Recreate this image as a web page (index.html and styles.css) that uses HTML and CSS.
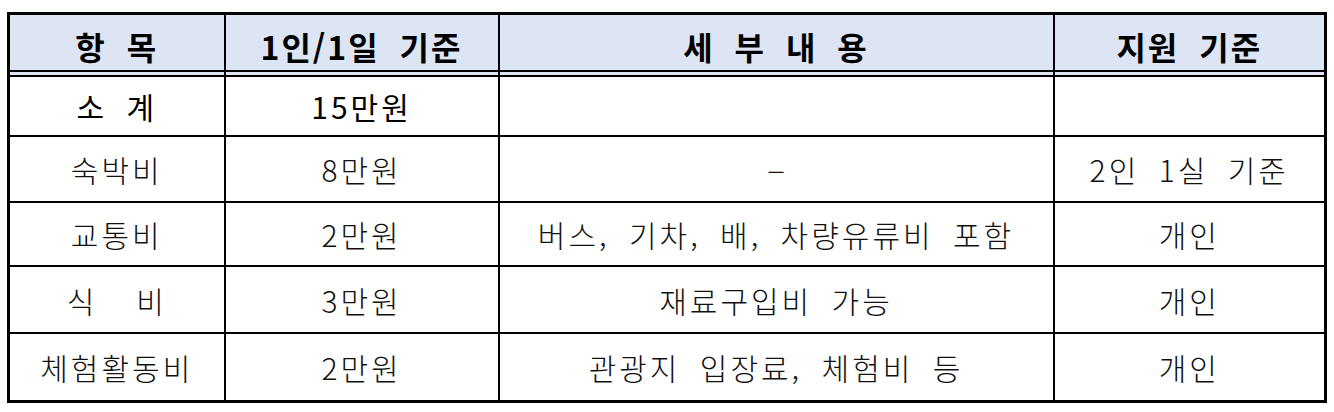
FILE: index.html
```html
<!DOCTYPE html>
<html lang="ko">
<head>
<meta charset="utf-8">
<link rel="stylesheet" href="styles.css">
</head>
<body>
<table class="cost">
  <colgroup>
    <col class="c1"><col class="c2"><col class="c3"><col class="c4">
  </colgroup>
  <thead>
    <tr class="head">
      <th>항 목</th>
      <th>1인/1일 기준</th>
      <th>세 부 내 용</th>
      <th>지원 기준</th>
    </tr>
  </thead>
  <tbody>
    <tr class="sum r1">
      <td>소 계</td>
      <td>15만원</td>
      <td></td>
      <td></td>
    </tr>
    <tr class="r2">
      <td>숙박비</td>
      <td>8만원</td>
      <td><span class="dash">–</span></td>
      <td>2인 1실 기준</td>
    </tr>
    <tr class="r3">
      <td>교통비</td>
      <td>2만원</td>
      <td class="wide">버스, 기차, 배, 차량유류비 포함</td>
      <td>개인</td>
    </tr>
    <tr class="r4">
      <td>식&nbsp; 비</td>
      <td>3만원</td>
      <td>재료구입비 가능</td>
      <td>개인</td>
    </tr>
    <tr class="r5">
      <td>체험활동비</td>
      <td>2만원</td>
      <td>관광지 입장료, 체험비 등</td>
      <td>개인</td>
    </tr>
  </tbody>
</table>
</body>
</html>
```

FILE: styles.css
```css
html, body {
  margin: 0;
  padding: 0;
  background: #ffffff;
}

body {
  padding: 12px 0 0 7px;
  font-family: "Noto Sans CJK KR", "Noto Sans", sans-serif;
}

.cost {
  border-collapse: collapse;
  table-layout: fixed;
  width: 1320px;
  border: 3px solid #000;
}

.c1 { width: 216px; }
.c2 { width: 274px; }
.c3 { width: 555px; }
.c4 { width: 272px; }

.cost th,
.cost td {
  border: 2px solid #000;
  padding: 0;
  text-align: center;
  vertical-align: middle;
  white-space: nowrap;
  font-size: 30px;
  line-height: 1;
  letter-spacing: 3px;
  word-spacing: 8px;
  color: #111;
  font-weight: 300;
}

.cost th:first-child,
.cost td:first-child { border-left: 3px solid #000; }
.cost th:last-child,
.cost td:last-child { border-right: 3px solid #000; }

.head th {
  background: #dde5f5;
  font-weight: 700;
  font-size: 32px;
  letter-spacing: 2px;
  word-spacing: 9px;
  color: #000;
  height: 58px;
  border-top: 3px solid #000;
  border-bottom: 2px solid #000;
  box-shadow: inset 0 -3px 0 #dde5f5, inset 0 -5px 0 #000;
  padding-top: 2px;
}

.sum td {
  font-weight: 400;
  color: #000;
}

.wide {
  letter-spacing: 4px;
  word-spacing: 9px;
}

.dash {
  display: inline-block;
  font-size: 34px;
  letter-spacing: 0;
  transform: scaleY(0.8);
}

.r1 td { height: 58px; }
.r2 td { height: 64px; }
.r3 td { height: 62px; }
.r4 td { height: 65px; }
.r5 td { height: 66px; border-bottom: 3px solid #000; }
```
